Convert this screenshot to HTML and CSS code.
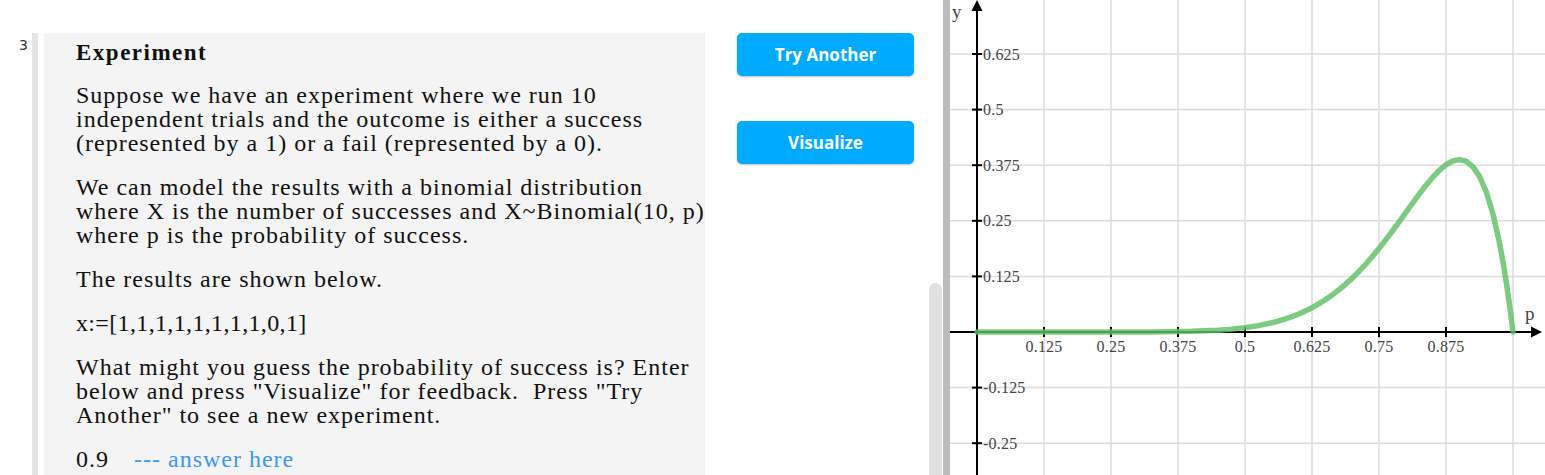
FILE: index.html
```html
<!DOCTYPE html>
<html>
<head>
<meta charset="utf-8">
<link rel="stylesheet" href="styles.css">
</head>
<body>
  <div class="gutter">3</div>
  <div class="cell">
    <div class="cell-bar"></div>
    <div class="panel">
      <h2 class="title">Experiment</h2>
      <p>Suppose we have an experiment where we run 10<br>independent trials and the outcome is either a success<br>(represented by a 1) or a fail (represented by a 0).</p>
      <p>We can model the results with a binomial distribution<br>where X is the number of successes and X~Binomial(10, p)<br>where p is the probability of success.</p>
      <p>The results are shown below.</p>
      <p class="data">x:=[1,1,1,1,1,1,1,1,0,1]</p>
      <p>What might you guess the probability of success is? Enter<br>below and press "Visualize" for feedback.&nbsp; Press "Try<br>Another" to see a new experiment.</p>
      <p class="answer"><span>0.9</span><span class="hint">--- answer here</span></p>
    </div>
  </div>
  <div class="actions">
    <button class="btn">Try Another</button>
    <button class="btn">Visualize</button>
  </div>
  <div class="scroller">
    <div class="thumb"></div>
    <div class="divider"></div>
  </div>
  <div class="graph">
    <svg width="595" height="475" viewBox="0 0 595 475">
      <g class="grid">
        <line x1="94" y1="0" x2="94" y2="475"/>
        <line x1="161" y1="0" x2="161" y2="475"/>
        <line x1="228" y1="0" x2="228" y2="475"/>
        <line x1="295" y1="0" x2="295" y2="475"/>
        <line x1="362" y1="0" x2="362" y2="475"/>
        <line x1="429" y1="0" x2="429" y2="475"/>
        <line x1="496" y1="0" x2="496" y2="475"/>
        <line x1="563" y1="0" x2="563" y2="475"/>
        <line x1="0" y1="54" x2="595" y2="54"/>
        <line x1="0" y1="109.6" x2="595" y2="109.6"/>
        <line x1="0" y1="165.2" x2="595" y2="165.2"/>
        <line x1="0" y1="220.8" x2="595" y2="220.8"/>
        <line x1="0" y1="276.4" x2="595" y2="276.4"/>
        <line x1="0" y1="387.6" x2="595" y2="387.6"/>
        <line x1="0" y1="443.2" x2="595" y2="443.2"/>
      </g>
      <g class="axis">
        <line x1="0" y1="332" x2="584" y2="332"/>
        <line x1="27" y1="475" x2="27" y2="8"/>
        <line x1="94" y1="327" x2="94" y2="337"/>
        <line x1="161" y1="327" x2="161" y2="337"/>
        <line x1="228" y1="327" x2="228" y2="337"/>
        <line x1="295" y1="327" x2="295" y2="337"/>
        <line x1="362" y1="327" x2="362" y2="337"/>
        <line x1="429" y1="327" x2="429" y2="337"/>
        <line x1="496" y1="327" x2="496" y2="337"/>
        <line x1="22" y1="54" x2="32" y2="54"/>
        <line x1="22" y1="109.6" x2="32" y2="109.6"/>
        <line x1="22" y1="165.2" x2="32" y2="165.2"/>
        <line x1="22" y1="220.8" x2="32" y2="220.8"/>
        <line x1="22" y1="276.4" x2="32" y2="276.4"/>
        <line x1="22" y1="387.6" x2="32" y2="387.6"/>
        <line x1="22" y1="443.2" x2="32" y2="443.2"/>
      </g>
      <polygon class="arrow" points="27,0 21.5,11 32.5,11"/>
      <polygon class="arrow" points="592,332 581,326.5 581,337.5"/>
      <polyline class="curve" points="27,332 200,332 214.6,331.77 241.4,331.3 268.2,330.15 281.6,329.12 295,327.65 308.4,325.6 321.8,322.78 335.2,319.01 341.9,316.7 348.6,314.06 355.3,311.07 362,307.72 368.7,303.94 375.4,299.74 382.1,295.08 388.8,289.93 395.5,284.28 402.2,278.13 408.9,271.47 415.6,264.27 422.3,256.6 429,248.47 435.7,239.92 442.4,231.02 449.1,221.85 455.8,212.55 462.5,203.25 469.2,194.13 475.9,185.42 482.6,177.4 489.3,170.37 496,164.76 502.7,160.99 509.4,159.6 516.1,161.22 522.8,166.54 529.5,176.41 536.2,191.77 542.9,213.7 549.6,243.42 552.95,261.63 556.3,282.33 559.65,305.7 563,332"/>
      <g class="ylabels">
        <text x="33" y="59.5">0.625</text>
        <text x="33" y="115">0.5</text>
        <text x="33" y="170.6">0.375</text>
        <text x="33" y="226.2">0.25</text>
        <text x="33" y="281.8">0.125</text>
        <text x="33" y="393">-0.125</text>
        <text x="33" y="448.6">-0.25</text>
      </g>
      <g class="xlabels">
        <text x="94" y="352">0.125</text>
        <text x="161" y="352">0.25</text>
        <text x="228" y="352">0.375</text>
        <text x="295" y="352">0.5</text>
        <text x="362" y="352">0.625</text>
        <text x="429" y="352">0.75</text>
        <text x="496" y="352">0.875</text>
      </g>
      <text class="axis-name" x="2" y="18">y</text>
      <text class="axis-name" x="575" y="320">p</text>
    </svg>
  </div>
</body>
</html>
```
FILE: styles.css
```css
html, body {
  margin: 0;
  padding: 0;
}
body {
  width: 1545px;
  height: 475px;
  overflow: hidden;
  display: flex;
  align-items: stretch;
  background: #fff;
  font-family: "Liberation Serif", "Times New Roman", serif;
  color: #111;
}
.gutter {
  flex: none;
  width: 32px;
  box-sizing: border-box;
  padding: 37px 4px 0 0;
  text-align: right;
  font-family: "DejaVu Sans", sans-serif;
  font-size: 14px;
  color: #333;
}
.cell {
  flex: none;
  display: flex;
  gap: 6px;
  padding-top: 33px;
}
.cell-bar {
  width: 6px;
  background: #e4e4e4;
}
.panel {
  width: 661px;
  box-sizing: border-box;
  background: #f4f4f4;
  padding: 8px 0 0 32px;
}
.title {
  margin: 0 0 18px;
  font-size: 23px;
  line-height: 24px;
  font-weight: bold;
  letter-spacing: 1.5px;
}
.panel p {
  margin: 0 0 20px;
  font-size: 24px;
  line-height: 24px;
  letter-spacing: 1px;
  white-space: nowrap;
}
.panel p.data {
  letter-spacing: 0.35px;
}
.answer {
  display: flex;
  gap: 25px;
}
.hint {
  color: #3a98f5;
}
.actions {
  flex: none;
  width: 177px;
  margin-left: 32px;
  padding-top: 33px;
  display: flex;
  flex-direction: column;
  gap: 45px;
}
.btn {
  height: 43px;
  border: none;
  border-radius: 5px;
  background: #00aaff;
  color: #fff;
  font-family: "Open Sans", sans-serif;
  font-weight: 700;
  font-size: 17px;
  box-shadow: 0 1px 2px rgba(0, 0, 0, 0.25);
  padding: 0;
}
.scroller {
  flex: none;
  display: flex;
  gap: 1px;
  margin-left: 15px;
}
.thumb {
  width: 13px;
  margin-top: 283px;
  background: #e0e0e0;
  border-radius: 7px 7px 0 0;
}
.divider {
  width: 7px;
  background: #bbbbbb;
}
.graph {
  flex: none;
  width: 595px;
}
.graph svg {
  display: block;
}
.grid line {
  stroke: #dcdcdc;
  stroke-width: 1.5;
}
.axis line {
  stroke: #000;
  stroke-width: 2;
}
.arrow {
  fill: #000;
}
.curve {
  fill: none;
  stroke: rgba(96, 192, 100, 0.82);
  stroke-width: 5.5;
  stroke-linejoin: round;
  stroke-linecap: round;
}
.ylabels text,
.xlabels text {
  font-family: "Liberation Serif", serif;
  font-size: 16px;
  letter-spacing: 0.2px;
  fill: #444;
}
.xlabels text {
  text-anchor: middle;
}
.axis-name {
  font-family: "Liberation Serif", serif;
  font-size: 19px;
  fill: #444;
}
```
